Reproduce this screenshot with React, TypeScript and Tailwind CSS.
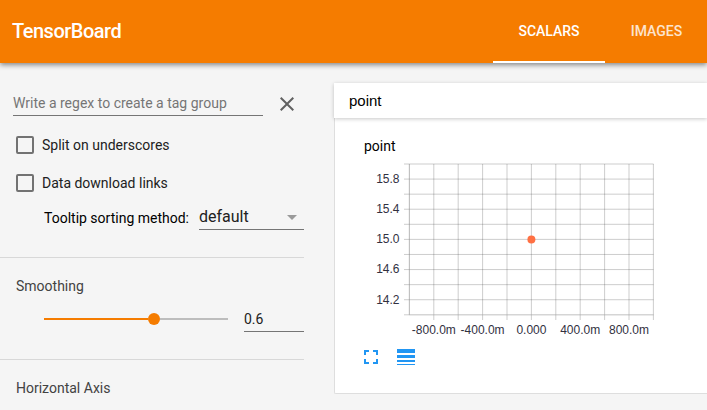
import type { ReactNode } from 'react';

const xTicks = [0, 1, 2, 3, 4, 5, 6, 7, 8, 9, 10].map((i) => 45.4 + i * 24.4);
const yTicks = [0, 1, 2, 3, 4, 5, 6, 7, 8, 9, 10].map((i) => 9 + i * 15.08);
const xLabels = ['-800.0m', '-400.0m', '0.000', '400.0m', '800.0m'];
const yLabels = ['15.8', '15.4', '15.0', '14.6', '14.2'];

function Checkbox({ children }: { children: ReactNode }) {
  return (
    <label className="flex h-[18px] items-center gap-2 text-sm text-[#212121]">
      <span className="h-[18px] w-[18px] rounded-[2px] border-2 border-[#727272]" />
      {children}
    </label>
  );
}

function Chart() {
  return (
    <svg width="300" height="186" className="block font-['Liberation_Sans',Arial,sans-serif] text-xs">
      <g stroke="#3c3c3c" strokeOpacity="0.25">
        {xTicks.map((x) => (
          <line key={x} x1={x} x2={x} y1="9" y2={x === xTicks[0] ? 160 : 165} />
        ))}
        {yTicks.map((y) => (
          <line key={y} x1="40" x2="289.5" y1={y} y2={y} />
        ))}
      </g>
      <line x1="45.4" x2="45.4" y1="9" y2="160" stroke="#aaa" strokeOpacity="0.5" />
      <line x1="45" x2="289.5" y1="159.8" y2="159.8" stroke="#ccc" strokeOpacity="0.5" />
      <circle cx="167.4" cy="84.5" r="4" fill="#ff7043" />
      <g fill="#32313f">
        {yLabels.map((t, i) => (
          <text key={t} x="35.5" y={28 + i * 30.16} textAnchor="end">{t}</text>
        ))}
        {xLabels.map((t, i) => (
          <text key={t} x={69.8 + i * 48.8} y="179" textAnchor="middle">{t}</text>
        ))}
      </g>
    </svg>
  );
}

export default function App() {
  return (
    <div className="flex h-[410px] w-[707px] flex-col overflow-hidden bg-[#f5f5f5] font-[Roboto,sans-serif] text-sm text-black">
      <header className="z-10 flex h-[63px] shrink-0 justify-between bg-[#f57c00] text-white shadow-[0_2px_5px_rgba(0,0,0,0.45)]">
        <h1 className="pl-3 text-xl leading-[62px] font-medium tracking-[-0.5px]">TensorBoard</h1>
        <nav className="flex font-medium">
          <a className="w-[112px] border-b-2 border-white text-center leading-[62px]">SCALARS</a>
          <a className="w-[102px] pl-px text-center leading-[62px] opacity-80">IMAGES</a>
        </nav>
      </header>
      <div className="flex min-h-0 flex-1">
        <aside className="w-[334px] shrink-0">
          <div className="flex h-[194px] w-[304px] flex-col">
            <div className="mt-7 ml-[13px] flex">
              <div className="h-[25px] w-[250px] border-b border-[#757575] leading-6 text-[#757575]">Write a regex to create a tag group</div>
              <svg width="24" height="24" viewBox="0 0 24 24" className="ml-3 mt-[1px] text-[#616161]">
                <path fill="currentColor" d="M19 6.41L17.59 5 12 10.59 6.41 5 5 6.41 10.59 12 5 17.59 6.41 19 12 13.41 17.59 19 19 17.59 13.41 12z" />
              </svg>
            </div>
            <div className="mt-5 ml-4 flex flex-col gap-5">
              <Checkbox>Split on underscores</Checkbox>
              <Checkbox>Data download links</Checkbox>
            </div>
            <div className="mt-3 ml-11 flex">
              <span className="w-[155px] pt-[4px] leading-5">Tooltip sorting method:</span>
              <div className="flex h-[26px] w-[105px] justify-between border-b border-[#757575] text-base leading-[26px] text-[#212121]">
                default
                <svg width="24" height="24" viewBox="0 0 24 24" className="mt-[1px]">
                  <path fill="#9a9a9a" d="M7 10l5 5 5-5z" />
                </svg>
              </div>
            </div>
          </div>
          <section className="flex h-[102px] w-[304px] flex-col border-t border-[#d8d8d8]">
            <h3 className="mt-[18px] ml-4 leading-5 text-[#424242]">Smoothing</h3>
            <div className="mt-[10px] ml-11 flex">
              <div className="mt-[7px] flex h-3 w-[184px] items-center">
                <div className="h-[2px] w-[104px] bg-[#f57c00]" />
                <div className="h-3 w-3 rounded-full bg-[#f57c00]" />
                <div className="h-[2px] flex-1 bg-[#bdbdbd]" />
              </div>
              <div className="ml-4 h-[26px] w-[60px] border-b border-[#757575] leading-[26px] text-[#212121]">0.6</div>
            </div>
          </section>
          <section className="w-[304px] border-t border-[#d8d8d8]">
            <h3 className="mt-[18px] ml-4 leading-5 text-[#424242]">Horizontal Axis</h3>
          </section>
        </aside>
        <main className="mt-5 h-[311px] flex-1 rounded-bl-[2px] border-b border-l border-[#dedede] bg-white">
          <h2 className="-ml-px h-[35px] bg-white pl-[15px] font-['Liberation_Sans',Arial,sans-serif] text-[15px] leading-[35px] shadow-[0_1px_4px_rgba(0,0,0,0.22)]">point</h2>
          <div className="pt-[17px] pl-[29px]">
            <h4 className="h-5 text-sm leading-[22px]">point</h4>
            <Chart />
            <svg width="60" height="32" fill="#2196f3" className="block">
              <path d="M0 9h5v2H2v3H0zM9 9h5v5h-2v-3H9zM0 18h2v3h3v2H0zM12 18h2v5H9v-2h3z" />
              <path d="M33 8h18v4H33zM33 14h18v3H33zM33 19h18v2H33zM33 23h18v1H33z" />
            </svg>
          </div>
        </main>
      </div>
    </div>
  );
}
